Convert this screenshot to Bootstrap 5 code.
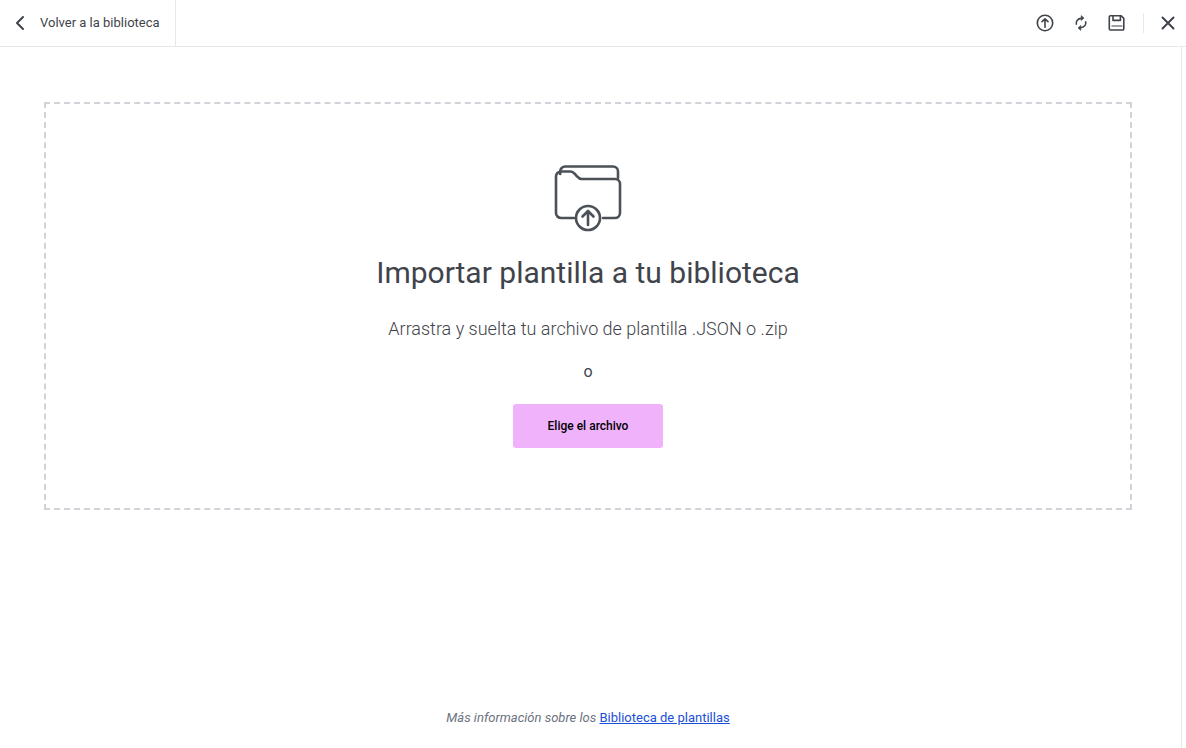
<!DOCTYPE html>
<html lang="es">
  <head>
    <meta charset="UTF-8" />
    <meta name="viewport" content="width=device-width, initial-scale=1.0" />
    <title>Importar plantilla</title>
    <link
      href="https://cdn.jsdelivr.net/npm/bootstrap@5.3.2/dist/css/bootstrap.min.css"
      rel="stylesheet"
    />
    <style>
      html,
      body {
        height: 100%;
        overflow: hidden;
      }
      body {
        font-family: Roboto, "Liberation Sans", sans-serif;
        color: #3f444b;
        background: #fff;
      }
      .top-bar {
        height: 47px;
        border-bottom: 1px solid #e6e8ea;
      }
      .back-link {
        width: 176px;
        padding-left: 14px;
        gap: 14px;
        font-size: 13px;
        color: #3f444b;
        border-right: 1px solid #e6e8ea;
        text-decoration: none;
      }
      .tool-btn {
        width: 36px;
        color: #3f444b;
      }
      .tool-sep {
        width: 1px;
        height: 20px;
        margin: 0 6px 0 8px;
        background: #e6e8ea;
      }
      .page-wrap {
        height: 701px;
      }
      .page-main {
        width: 1176px;
        padding: 55px 44px 0;
      }
      .side-rail {
        width: 5px;
        margin-left: 5px;
        border-left: 1px solid #e6e8ea;
      }
      .drop-zone {
        height: 408px;
        padding-top: 60px;
        border: 2px dashed #d0d3d8;
      }
      .drop-title {
        margin: 21px 0 0;
        font-size: 30px;
        font-weight: 400;
        line-height: 40px;
        color: #3f444b;
      }
      .drop-text {
        margin: 24px 0 0;
        font-size: 18px;
        font-weight: 300;
        line-height: 24px;
      }
      .drop-or {
        margin: 19px 0 0;
        font-size: 16px;
        line-height: 24px;
      }
      .pick-btn {
        width: 150px;
        height: 44px;
        margin-top: 20px;
        padding: 0;
        font-size: 12px;
        font-weight: 500;
        color: #000;
        background: #f1b2fc;
        border: 0;
        border-radius: 3px;
      }
      .foot-note {
        margin-top: 199px;
        font-size: 13px;
        line-height: 18px;
      }
      .foot-note em {
        color: #6b7280;
      }
      .foot-note a {
        color: #1a4fd8;
      }
    </style>
  </head>
  <body>
    <header class="top-bar d-flex justify-content-between">
      <a class="back-link d-flex align-items-center" href="#">
        <svg width="12" height="16" viewBox="0 0 12 16" fill="none" stroke="currentColor" stroke-width="2" stroke-linecap="round" stroke-linejoin="round">
          <path d="M9 2 3 8l6 6" />
        </svg>
        <span>Volver a la biblioteca</span>
      </a>
      <div class="d-flex align-items-center">
        <div class="tool-btn d-flex justify-content-center">
          <svg width="18" height="18" viewBox="0 0 18 18" fill="none" stroke="currentColor" stroke-width="1.6" stroke-linecap="round" stroke-linejoin="round">
            <circle cx="9" cy="9" r="7.7" />
            <path d="M9 13.2V5M6 7.7 9 4.8l3 2.9" />
          </svg>
        </div>
        <div class="tool-btn d-flex justify-content-center">
          <svg width="18" height="18" viewBox="0 0 18 18" fill="none" stroke="currentColor" stroke-width="1.6" stroke-linejoin="round">
            <path d="M4.4 10.8C3.4 7.2 6 4.3 9.6 4.4" />
            <path d="M13.6 7.2c1 3.6-1.6 6.5-5.2 6.4" />
            <path d="M9.2 1.6v5l2.8-2.5zM8.8 11.4v5L6 13.9z" fill="currentColor" stroke-width="0.6" />
          </svg>
        </div>
        <div class="tool-btn d-flex justify-content-center">
          <svg width="18" height="18" viewBox="0 0 18 18" fill="none" stroke="currentColor" stroke-width="1.6" stroke-linejoin="round">
            <path d="M2.5 1.8h10.7l2.6 2.6v10.4a1.2 1.2 0 0 1-1.2 1.2H2.5a1.2 1.2 0 0 1-1.2-1.2V3a1.2 1.2 0 0 1 1.2-1.2z" />
            <path d="M5 2v4.4h7.4V2" />
            <path d="M3.5 12h11" stroke-width="1" />
          </svg>
        </div>
        <span class="tool-sep"></span>
        <div class="tool-btn d-flex justify-content-center">
          <svg width="16" height="16" viewBox="0 0 16 16" fill="none" stroke="currentColor" stroke-width="2" stroke-linecap="round">
            <path d="M2.5 2.5l11 11M13.5 2.5l-11 11" />
          </svg>
        </div>
      </div>
    </header>

    <div class="page-wrap d-flex">
      <main class="page-main text-center">
        <section class="drop-zone d-flex flex-column align-items-center">
          <svg width="68" height="68" viewBox="0 0 68 68" fill="none" stroke="#4b5157" stroke-width="2.6" stroke-linecap="round" stroke-linejoin="round">
            <path d="M6.2 10V7.5A5 5 0 0 1 11.2 2.5H59a5 5 0 0 1 5 5V14" />
            <path d="M20 54H7a5 5 0 0 1-5-5V12.5a5 5 0 0 1 5-5h9.5c2 0 3 .8 4.3 2.3l2.2 2.6c1.500 1.700 2.500 2.600 4.500 2.600H61a5 5 0 0 1 5 5V49a5 5 0 0 1-5 5H49" />
            <circle cx="34" cy="54" r="12" />
            <path d="M34 61V47.500M28.500 52.500 34 47l5.500 5.500" />
          </svg>
          <h1 class="drop-title">Importar plantilla a tu biblioteca</h1>
          <p class="drop-text">Arrastra y suelta tu archivo de plantilla .JSON o .zip</p>
          <p class="drop-or">o</p>
          <button class="pick-btn btn" type="button">Elige el archivo</button>
        </section>
        <p class="foot-note mb-0">
          <em>Más información sobre los</em>
          <a href="#">Biblioteca de plantillas</a>
        </p>
      </main>
      <div class="side-rail"></div>
    </div>

    <script src="https://cdn.jsdelivr.net/npm/bootstrap@5.3.2/dist/js/bootstrap.bundle.min.js"></script>
  </body>
</html>
